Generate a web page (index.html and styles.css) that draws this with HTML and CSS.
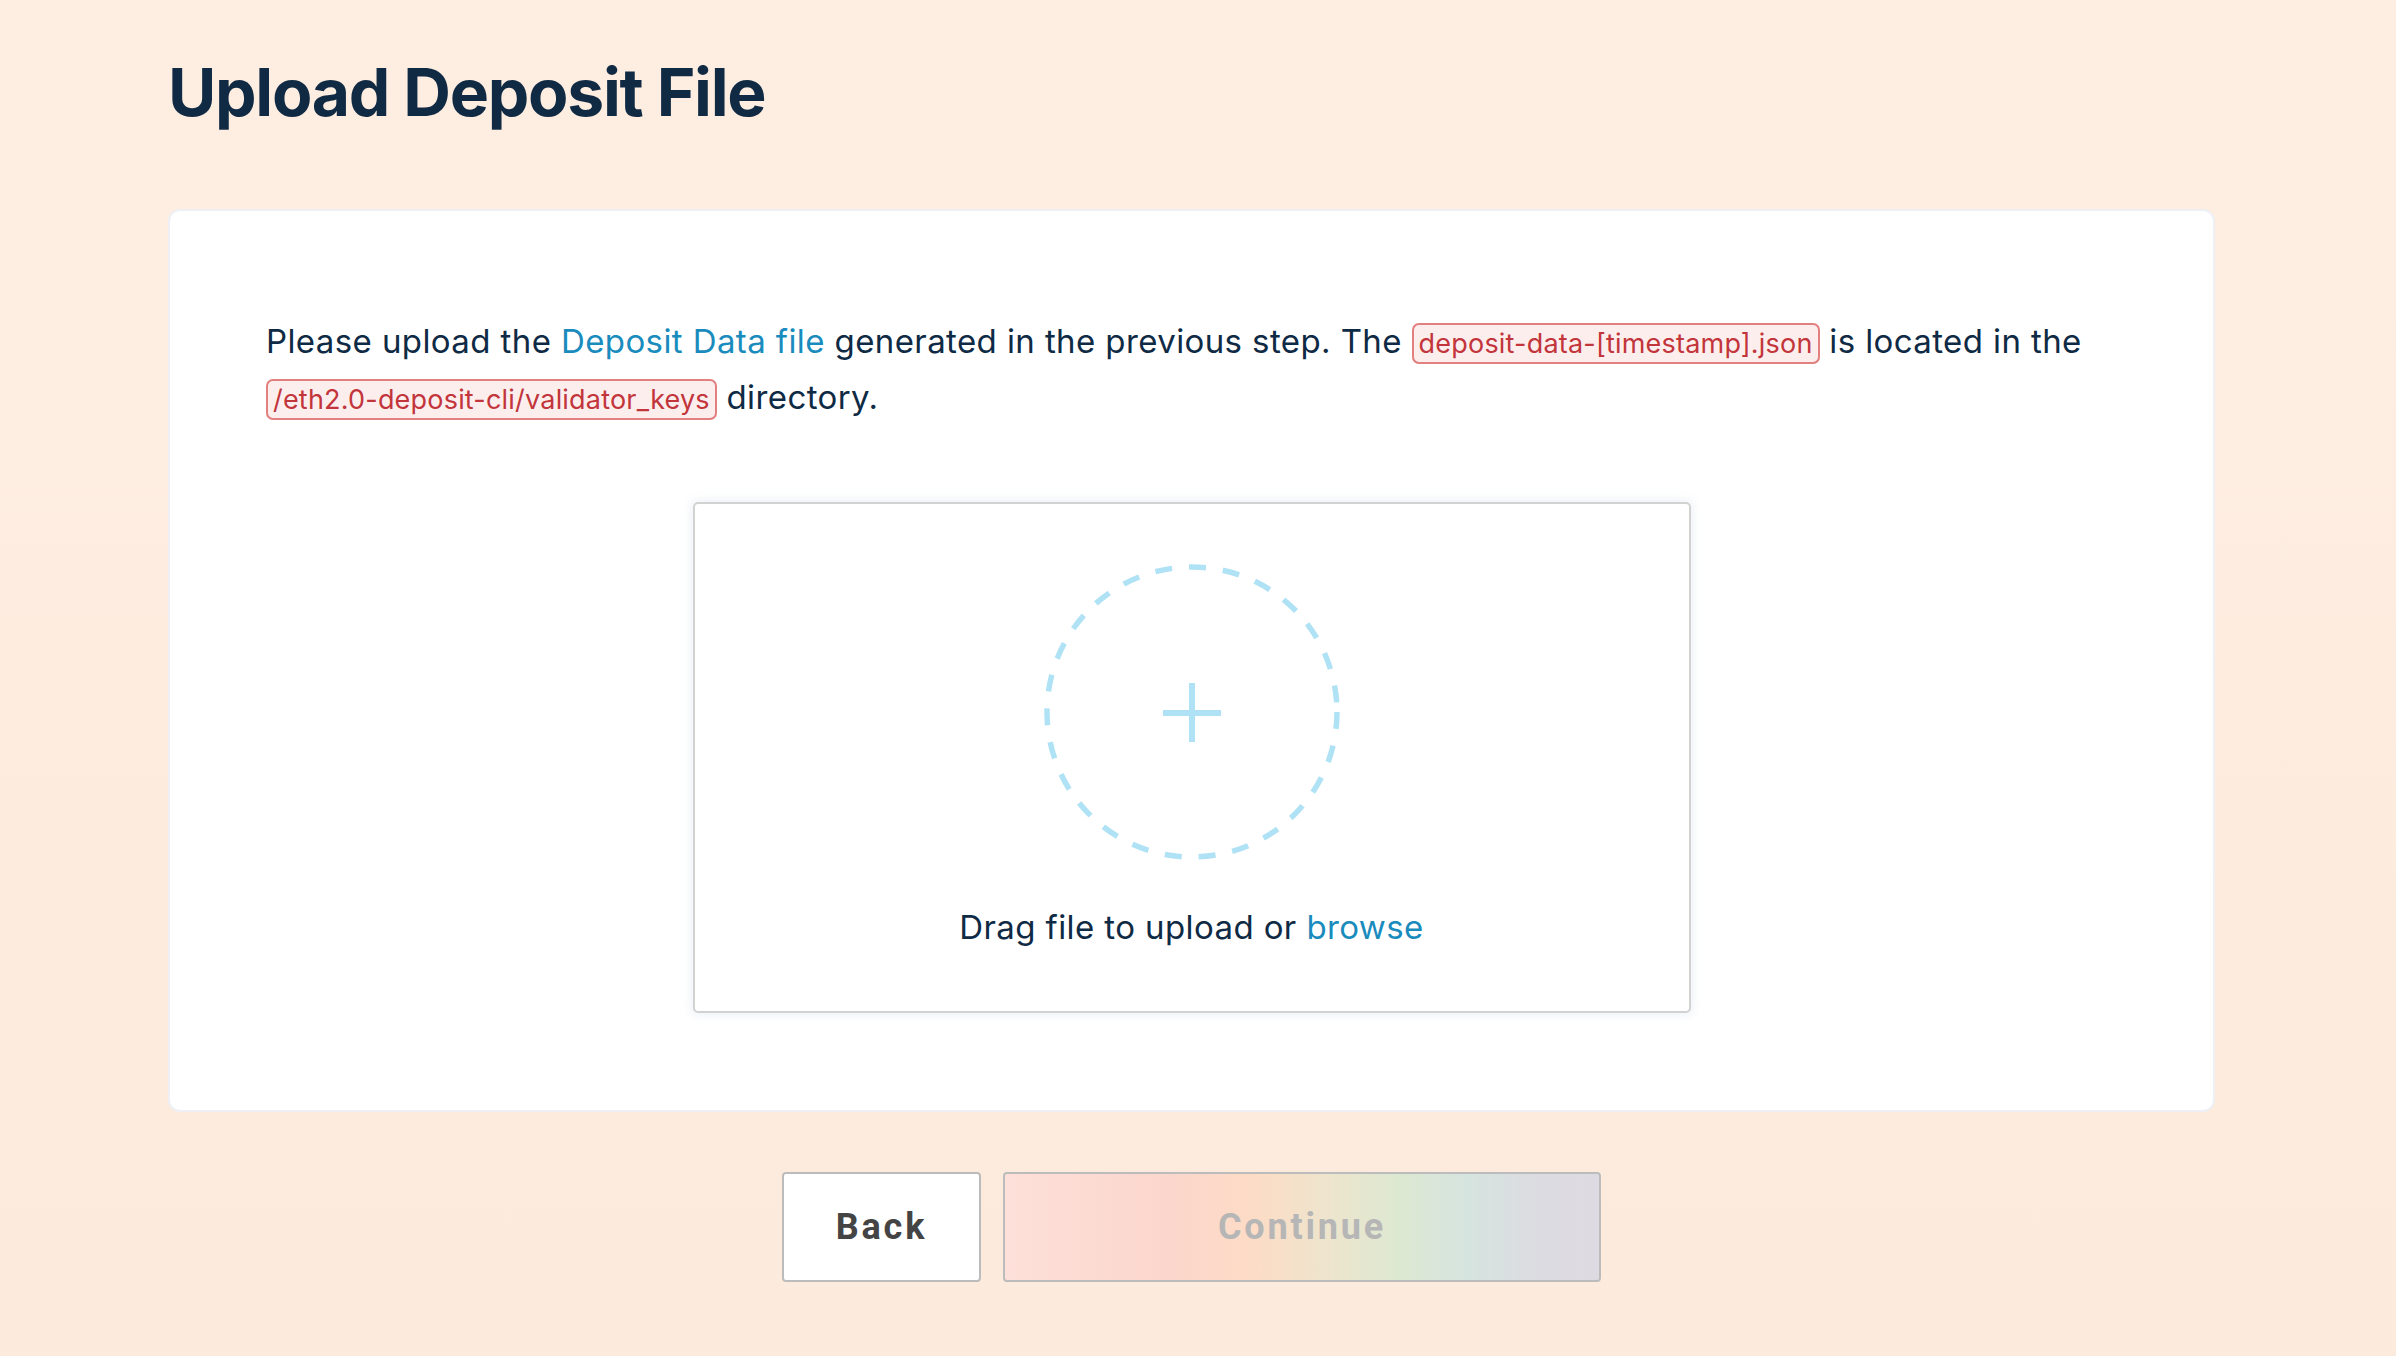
FILE: index.html
```html
<!DOCTYPE html>
<html lang="en">
<head>
<meta charset="utf-8">
<title>Upload Deposit File</title>
<link rel="stylesheet" href="styles.css">
</head>
<body>
<main class="page">
  <h1 class="title">Upload Deposit File</h1>
  <section class="card">
    <p class="intro">Please upload the <a class="link" href="#">Deposit Data file</a> generated in the previous step. The <code class="code">deposit-data-[timestamp].json</code> is located in the <code class="code">/eth2.0-deposit-cli/validator_keys</code> directory.</p>
    <div class="dropzone">
      <svg class="drop-icon" width="300" height="300" viewBox="0 0 300 300" aria-hidden="true">
        <circle cx="150" cy="150" r="145" fill="none" stroke="#b0e2f5" stroke-width="5.5" stroke-dasharray="17 17" stroke-linecap="butt"/>
        <line x1="150" y1="121" x2="150" y2="180" stroke="#b0e2f5" stroke-width="6"/>
        <line x1="121" y1="151" x2="179" y2="151" stroke="#b0e2f5" stroke-width="6"/>
      </svg>
      <p class="drop-text">Drag file to upload or <a class="link" href="#">browse</a></p>
    </div>
  </section>
  <div class="actions">
    <button class="btn btn-back" type="button">Back</button>
    <button class="btn btn-continue" type="button" disabled>Continue</button>
  </div>
</main>
</body>
</html>
```
FILE: styles.css
```css
html, body {
  margin: 0;
  padding: 0;
}
body {
  min-height: 1356px;
  background: linear-gradient(180deg, #feeee2 0%, #fcebdc 100%);
  font-family: "Inter", "Noto Sans", sans-serif;
  color: #0f2a44;
}
.page {
  width: 2047px;
  margin-left: 168px;
  padding-top: 52px;
}
.title {
  margin: 0;
  font-size: 66px;
  line-height: 80px;
  font-weight: 700;
  letter-spacing: -1.3px;
  color: #112a43;
}
.card {
  margin-top: 77px;
  background: #ffffff;
  border: 2px solid #eef0f5;
  border-radius: 12px;
  padding: 102px 96px 97px 96px;
}
.intro {
  margin: 0;
  font-size: 33px;
  line-height: 56px;
  letter-spacing: 0.4px;
  color: #0f2a44;
}
.link {
  color: #1a8bbd;
  text-decoration: none;
}
.code {
  font-family: "Inter", "Noto Sans", sans-serif;
  font-size: 27px;
  line-height: 1;
  letter-spacing: 0.2px;
  color: #c2353b;
  background: #fdeeee;
  border: 2px solid #e27f7f;
  border-radius: 7px;
  padding: 2px 5px;
}
.dropzone {
  margin: 77px auto 0;
  width: 994px;
  height: 507px;
  border: 2px solid #d2d2d2;
  border-radius: 5px;
  box-shadow: 0 0 10px 2px rgba(225, 230, 240, 0.6);
  display: flex;
  flex-direction: column;
  align-items: center;
  box-sizing: content-box;
}
.drop-icon {
  margin-top: 58px;
  display: block;
}
.drop-text {
  margin: 37px 0 0;
  font-size: 33px;
  line-height: 56px;
  letter-spacing: 0.4px;
  color: #0f2a44;
}
.actions {
  margin-top: 60px;
  display: flex;
  justify-content: center;
  gap: 22px;
}
.btn {
  height: 110px;
  border: 2px solid #bcbcbc;
  border-radius: 4px;
  font-family: "Roboto", "Liberation Sans", sans-serif;
  font-weight: 700;
  font-size: 36px;
  letter-spacing: 2.8px;
  cursor: pointer;
}
.btn-back {
  width: 199px;
  background: #ffffff;
  color: #444444;
}
.btn-continue {
  width: 598px;
  color: #b6b6b6;
  background: linear-gradient(90deg, #fde0d9 0%, #fbd6cc 28%, #fddcc6 42%, #ede5cd 55%, #dde8d1 66%, #d6e4df 78%, #dcdbe1 90%, #dedae2 100%);
}
```
